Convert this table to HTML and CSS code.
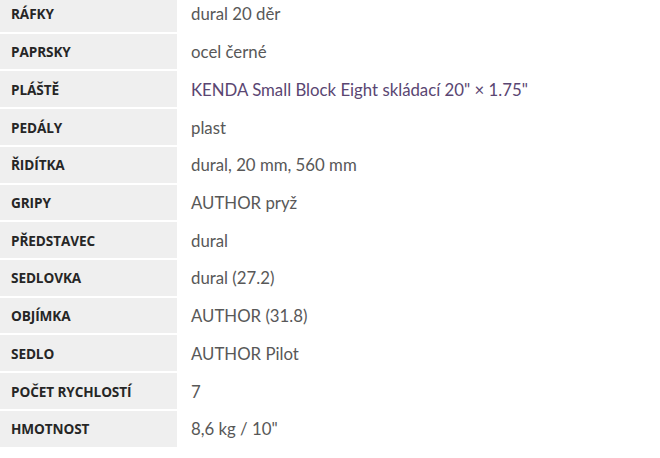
FILE: index.html
```html
<!DOCTYPE html>
<html lang="cs">
<head>
<meta charset="utf-8">
<link rel="stylesheet" href="styles.css">
</head>
<body>
<table class="specs">
<tbody>
<tr><th>RÁFKY</th><td>dural 20 děr</td></tr>
<tr><th>PAPRSKY</th><td>ocel černé</td></tr>
<tr><th>PLÁŠTĚ</th><td><a class="link" href="#">KENDA Small Block Eight skládací 20" × 1.75"</a></td></tr>
<tr><th>PEDÁLY</th><td>plast</td></tr>
<tr><th>ŘIDÍTKA</th><td>dural, 20 mm, 560 mm</td></tr>
<tr><th>GRIPY</th><td>AUTHOR pryž</td></tr>
<tr><th>PŘEDSTAVEC</th><td>dural</td></tr>
<tr><th>SEDLOVKA</th><td>dural (27.2)</td></tr>
<tr><th>OBJÍMKA</th><td>AUTHOR (31.8)</td></tr>
<tr><th>SEDLO</th><td>AUTHOR Pilot</td></tr>
<tr><th>POČET RYCHLOSTÍ</th><td>7</td></tr>
<tr><th>HMOTNOST</th><td>8,6 kg / 10"</td></tr>
</tbody>
</table>
</body>
</html>
```
FILE: styles.css
```css
html, body {
  margin: 0;
  padding: 0;
  background: #fff;
}
.specs {
  border-collapse: collapse;
  margin-top: -5px;
  width: 100%;
}
.specs tr {
  height: 37.73px;
  border-bottom: 2px solid #fff;
}
.specs th {
  width: 177px;
  box-sizing: border-box;
  background: #efefef;
  text-align: left;
  padding: 0 0 0 11px;
  font-family: "Open Sans", sans-serif;
  font-weight: 700;
  font-size: 13.6px;
  letter-spacing: -0.1px;
  color: #262626;
  vertical-align: middle;
}
.specs td {
  padding: 0 0 0 14px;
  font-family: "Lato", sans-serif;
  font-weight: 400;
  font-size: 16.8px;
  color: #585858;
  vertical-align: middle;
}
.link {
  color: #5a4672;
  text-decoration: none;
}
```
